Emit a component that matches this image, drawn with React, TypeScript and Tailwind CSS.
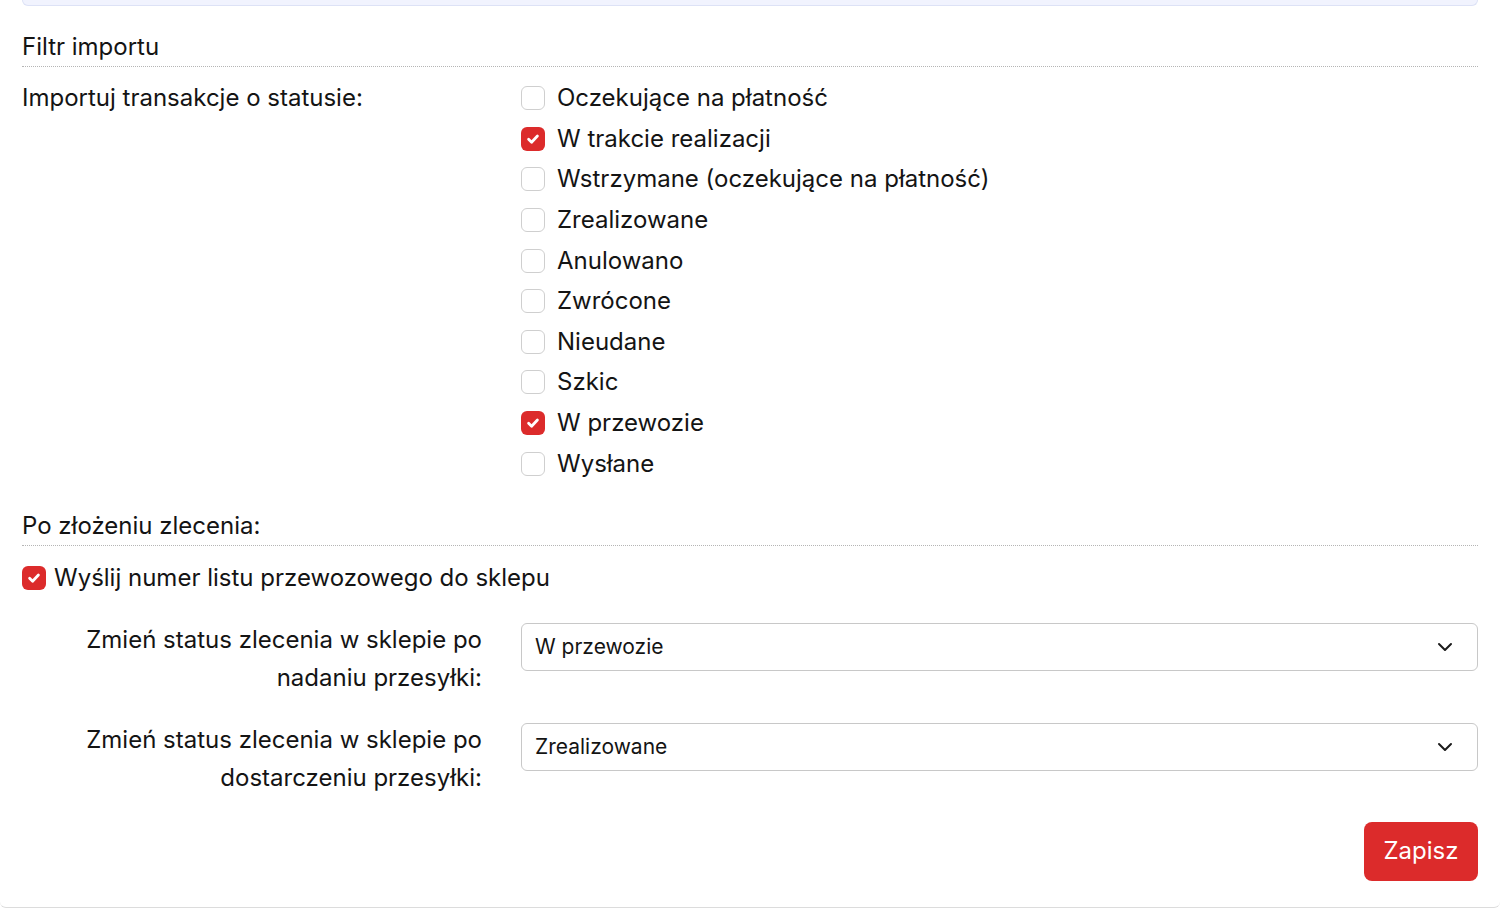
import { ChevronDown } from 'lucide-react';

const statuses = [
  { label: 'Oczekujące na płatność', checked: false },
  { label: 'W trakcie realizacji', checked: true },
  { label: 'Wstrzymane (oczekujące na płatność)', checked: false },
  { label: 'Zrealizowane', checked: false },
  { label: 'Anulowano', checked: false },
  { label: 'Zwrócone', checked: false },
  { label: 'Nieudane', checked: false },
  { label: 'Szkic', checked: false },
  { label: 'W przewozie', checked: true },
  { label: 'Wysłane', checked: false },
];

function Checkbox({ checked }: { checked: boolean }) {
  if (checked) {
    return (
      <span className="w-[24px] h-[24px] rounded-[6px] bg-[#dc2b2b] flex items-center justify-center shrink-0">
        <svg width="16" height="16" viewBox="0 0 16 16" fill="none">
          <path d="M3.6 8.3 L6.6 11.2 L12.4 5" stroke="white" strokeWidth="2.8" strokeLinecap="round" strokeLinejoin="round" />
        </svg>
      </span>
    );
  }
  return <span className="w-[24px] h-[24px] rounded-[6px] border-[1.5px] border-[#cfcfcf] bg-white shrink-0" />;
}

function SelectBox({ value }: { value: string }) {
  return (
    <div className="mt-[2px] h-[48px] border border-[#c8c8c8] rounded-[6px] flex items-center justify-between pl-[13px] pr-[20px] text-[21px] bg-white">
      <span>{value}</span>
      <ChevronDown size={24} strokeWidth={2} className="text-[#1b1b1b]" />
    </div>
  );
}

export default function App() {
  return (
    <div
      className="min-h-screen bg-white text-[#141414]"
      style={{ fontFamily: 'Inter, "Noto Sans", sans-serif' }}
    >
      <div className="w-full border-b border-[#dcdcdc] rounded-b-[6px] px-[22px] pb-[26px]">
        {/* top panel edge */}
        <div className="h-[6px] bg-[#f1f3fe] border-x border-b border-[#dde2f6] rounded-b-[12px]" />

        <div className="mt-[25px] pb-[3px] border-b border-dotted border-[#b5b5b5] text-[24px] leading-[32px]">
          Filtr importu
        </div>

        <div className="mt-[11px] flex">
          <div className="w-[499px] text-[24px] leading-[40.6px]">Importuj transakcje o statusie:</div>
          <div className="flex flex-col">
            {statuses.map((s) => (
              <label key={s.label} className="h-[40.6px] flex items-center gap-[12px] text-[24px]">
                <Checkbox checked={s.checked} />
                <span>{s.label}</span>
              </label>
            ))}
          </div>
        </div>

        <div className="mt-[26px] pb-[3px] border-b border-dotted border-[#b5b5b5] text-[24px] leading-[32px]">
          Po złożeniu zlecenia:
        </div>

        <label className="mt-[16px] h-[32px] flex items-center gap-[8px] text-[24px]">
          <Checkbox checked />
          <span>Wyślij numer listu przewozowego do sklepu</span>
        </label>

        <div className="mt-[27px] flex">
          <div className="w-[460px] text-right text-[24px] leading-[38px]">
            Zmień status zlecenia w sklepie po
            <br />
            nadaniu przesyłki:
          </div>
          <div className="ml-[39px] flex-1">
            <SelectBox value="W przewozie" />
          </div>
        </div>

        <div className="mt-[24px] flex">
          <div className="w-[460px] text-right text-[24px] leading-[38px]">
            Zmień status zlecenia w sklepie po
            <br />
            dostarczeniu przesyłki:
          </div>
          <div className="ml-[39px] flex-1">
            <SelectBox value="Zrealizowane" />
          </div>
        </div>

        <div className="mt-[25px] flex justify-end">
          <button className="h-[59px] w-[114px] rounded-[8px] bg-[#dc2b2b] text-white text-[24px]">Zapisz</button>
        </div>
      </div>
    </div>
  );
}
